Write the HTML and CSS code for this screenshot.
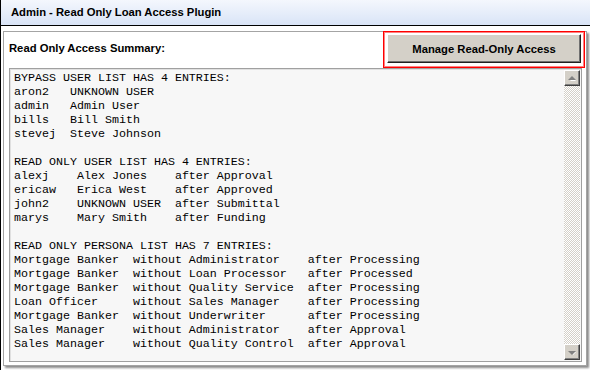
FILE: index.html
```html
<!DOCTYPE html>
<html lang="en">
<head>
    <meta charset="UTF-8">
    <meta name="viewport" content="width=device-width, initial-scale=1.0">
    <title>Admin - Read Only Loan Access Plugin</title>
    <link rel="stylesheet" href="styles.css">
</head>
<body>
    <div class="window">
        <div class="titlebar">Admin - Read Only Loan Access Plugin</div>

        <div class="content">
            <div class="panel">
                <div class="panel-header">
                    <span class="summary-label">Read Only Access Summary:</span>
                    <div class="highlight">
                        <button class="manage-btn">Manage Read-Only Access</button>
                    </div>
                </div>

                <div class="summary-box">
<pre class="summary-text">BYPASS USER LIST HAS 4 ENTRIES:
aron2   UNKNOWN USER
admin   Admin User
bills   Bill Smith
stevej  Steve Johnson

READ ONLY USER LIST HAS 4 ENTRIES:
alexj    Alex Jones    after Approval
ericaw   Erica West    after Approved
john2    UNKNOWN USER  after Submittal
marys    Mary Smith    after Funding

READ ONLY PERSONA LIST HAS 7 ENTRIES:
Mortgage Banker  without Administrator    after Processing
Mortgage Banker  without Loan Processor   after Processed
Mortgage Banker  without Quality Service  after Processing
Loan Officer     without Sales Manager    after Processing
Mortgage Banker  without Underwriter      after Processing
Sales Manager    without Administrator    after Approval
Sales Manager    without Quality Control  after Approval</pre>

                    <!-- disabled scrollbar, content fits -->
                    <div class="scrollbar">
                        <div class="scroll-btn">
                            <svg width="14" height="13" viewBox="0 0 14 13">
                                <polygon points="4,8 7,5 10,8" fill="#fff" transform="translate(1,1)"/>
                                <polygon points="3,8 7,4 11,8" fill="#808080"/>
                            </svg>
                        </div>
                        <div class="scroll-track"></div>
                        <div class="scroll-btn">
                            <svg width="14" height="13" viewBox="0 0 14 13">
                                <polygon points="4,5 7,8 10,5" fill="#fff" transform="translate(1,1)"/>
                                <polygon points="3,5 7,9 11,5" fill="#808080"/>
                            </svg>
                        </div>
                    </div>
                </div>
            </div>
        </div>
    </div>
</body>
</html>
```

FILE: styles.css
```css
body, html {
    margin: 0;
    padding: 0;
}

body {
    font-family: 'Liberation Sans', Arial, sans-serif;
    color: #000;
    background: #fff;
}

.window {
    width: 589px;
    height: 370px;
    border-left: 1px solid #000;
    background: #fff;
    overflow: hidden;
}

.titlebar {
    height: 25px;
    line-height: 25px;
    padding-left: 10px;
    font-size: 11.25px;
    font-weight: bold;
    background: linear-gradient(#f4f7fd, #d9e4f7);
    border-bottom: 1px solid #000;
}

.content {
    padding: 5px 0 0 2px;
}

.panel {
    width: 584px;
    box-sizing: border-box;
    border: 1px solid #a4a4a4;
    background: #fff;
    box-shadow: 2px 2px 2px #8c8c8c;
}

.panel-header {
    display: flex;
    justify-content: space-between;
    align-items: flex-start;
    height: 36px;
}

.summary-label {
    padding-left: 5px;
    margin-top: 10px;
    font-size: 11.25px;
    font-weight: bold;
}

.highlight {
    width: 202px;
    height: 37px;
    box-sizing: border-box;
    margin: -1px 1px 0 0;
    border: 1px solid #ff0000;
    box-shadow: inset 0 0 0 1px #ff8080;
}

.manage-btn {
    display: block;
    width: 194px;
    height: 29px;
    margin: 2px 0 0 3px;
    padding: 0;
    box-sizing: border-box;
    font-family: 'Liberation Sans', Arial, sans-serif;
    font-size: 11.25px;
    font-weight: bold;
    color: #000;
    background: #d4d0c8;
    border-top: 1px solid #fff;
    border-left: 1px solid #fff;
    border-right: 1px solid #202020;
    border-bottom: 1px solid #202020;
    box-shadow: inset -1px -1px 0 #707070;
    cursor: pointer;
}

.summary-box {
    display: flex;
    height: 294px;
    margin: 0 4px 3px 5px;
    box-sizing: border-box;
    border: 1px solid #a0a0a0;
    box-shadow: inset 1px 1px 0 #e0e0e0;
    background: #f7f7f7;
}

.summary-text {
    flex: 1;
    margin: 0;
    padding: 2px 0 0 4px;
    font-family: 'Liberation Mono', 'Courier New', monospace;
    font-size: 11.67px;
    line-height: 14px;
    color: #000;
}

.scrollbar {
    display: flex;
    flex-direction: column;
    width: 16px;
    margin: 1px 1px 1px 0;
}

.scroll-btn {
    height: 16px;
    box-sizing: border-box;
    display: flex;
    align-items: center;
    justify-content: center;
    background: #d4d0c8;
    border-top: 1px solid #fff;
    border-left: 1px solid #fff;
    border-right: 1px solid #404040;
    border-bottom: 1px solid #404040;
    box-shadow: inset -1px -1px 0 #808080;
}

.scroll-track {
    flex: 1;
    background-image: conic-gradient(#d4d0c8 25%, #fff 0 50%, #d4d0c8 0 75%, #fff 0);
    background-size: 2px 2px;
}
```
